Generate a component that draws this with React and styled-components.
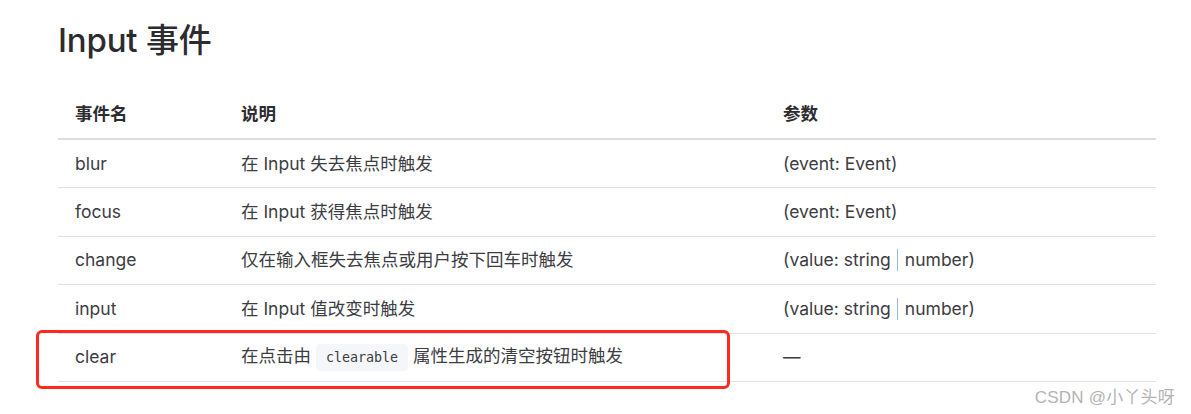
import React from 'react';
import styled, { createGlobalStyle } from 'styled-components';

const GlobalStyle = createGlobalStyle`
  html, body {
    margin: 0;
    padding: 0;
    background: #fff;
  }
  body {
    font-family: Inter, "Noto Sans CJK SC", sans-serif;
    color: #3c3c43;
  }
`;

const Page = styled.div`
  position: relative;
  width: 1191px;
  height: 414px;
  overflow: hidden;
  padding: 18px 35px 0 58px;
  box-sizing: border-box;
`;

const Title = styled.h2`
  margin: 0 0 28px;
  font-size: 33px;
  line-height: 44px;
  font-weight: 500;
  color: #2c2c30;
  letter-spacing: -0.2px;
`;

const Table = styled.table`
  width: 100%;
  border-collapse: collapse;
  font-size: 17.5px;
  table-layout: fixed;
`;

const Th = styled.th`
  box-sizing: border-box;
  text-align: left;
  font-weight: 700;
  color: #2c2c30;
  padding: 12px 16px 12px 17px;
  line-height: 24px;
  border-bottom: 2px solid #dcdde3;
  width: ${p => p.$w || 'auto'};
`;

const Td = styled.td`
  box-sizing: border-box;
  height: 48.5px;
  padding: 0 16px 0 17px;
  line-height: 24px;
  border-bottom: 1px solid #e0e1e6;
  color: #3c3c43;
  white-space: nowrap;
`;

const Code = styled.code`
  font-family: "DejaVu Sans Mono", "Liberation Mono", monospace;
  font-size: 13.3px;
  padding: 6px 10px;
  margin: 0 5px;
  background: #f5f6f9;
  border-radius: 4px;
  color: #3c3c43;
`;

const Pipe = styled.span`
  display: inline-block;
  width: 1px;
  height: 22px;
  margin: 0 7px 0 6px;
  background: #9ab9d6;
  vertical-align: -5px;
`;

const Highlight = styled.div`
  position: absolute;
  left: 36px;
  top: 330px;
  width: 694px;
  height: 59px;
  border: 3px solid #ff2a1f;
  border-radius: 6px;
  box-sizing: border-box;
  pointer-events: none;
`;

const Watermark = styled.div`
  position: absolute;
  right: 16px;
  bottom: 6px;
  font-family: "Liberation Sans", "Noto Sans CJK SC", sans-serif;
  font-size: 17px;
  color: #b3b3b3;
  letter-spacing: 0.2px;
`;

const rows = [
  { name: 'blur', desc: '在 Input 失去焦点时触发', args: '(event: Event)' },
  { name: 'focus', desc: '在 Input 获得焦点时触发', args: '(event: Event)' },
  { name: 'change', desc: '仅在输入框失去焦点或用户按下回车时触发', args: 'union' },
  { name: 'input', desc: '在 Input 值改变时触发', args: 'union' },
  { name: 'clear', desc: 'code', args: '—' },
];

function Args({ value }) {
  if (value === 'union') {
    return <>(value: string<Pipe />number)</>;
  }
  return value;
}

function Desc({ value }) {
  if (value === 'code') {
    return <>在点击由<Code>clearable</Code>属性生成的清空按钮时触发</>;
  }
  return value;
}

export default function App() {
  return (
    <>
      <GlobalStyle />
      <Page>
        <Title>Input 事件</Title>
        <Table>
          <thead>
            <tr>
              <Th $w="166px">事件名</Th>
              <Th $w="542px">说明</Th>
              <Th>参数</Th>
            </tr>
          </thead>
          <tbody>
            {rows.map((row, i) => (
              <tr key={i}>
                <Td>{row.name}</Td>
                <Td><Desc value={row.desc} /></Td>
                <Td><Args value={row.args} /></Td>
              </tr>
            ))}
          </tbody>
        </Table>
        <Highlight />
        <Watermark>CSDN @小丫头呀</Watermark>
      </Page>
    </>
  );
}
